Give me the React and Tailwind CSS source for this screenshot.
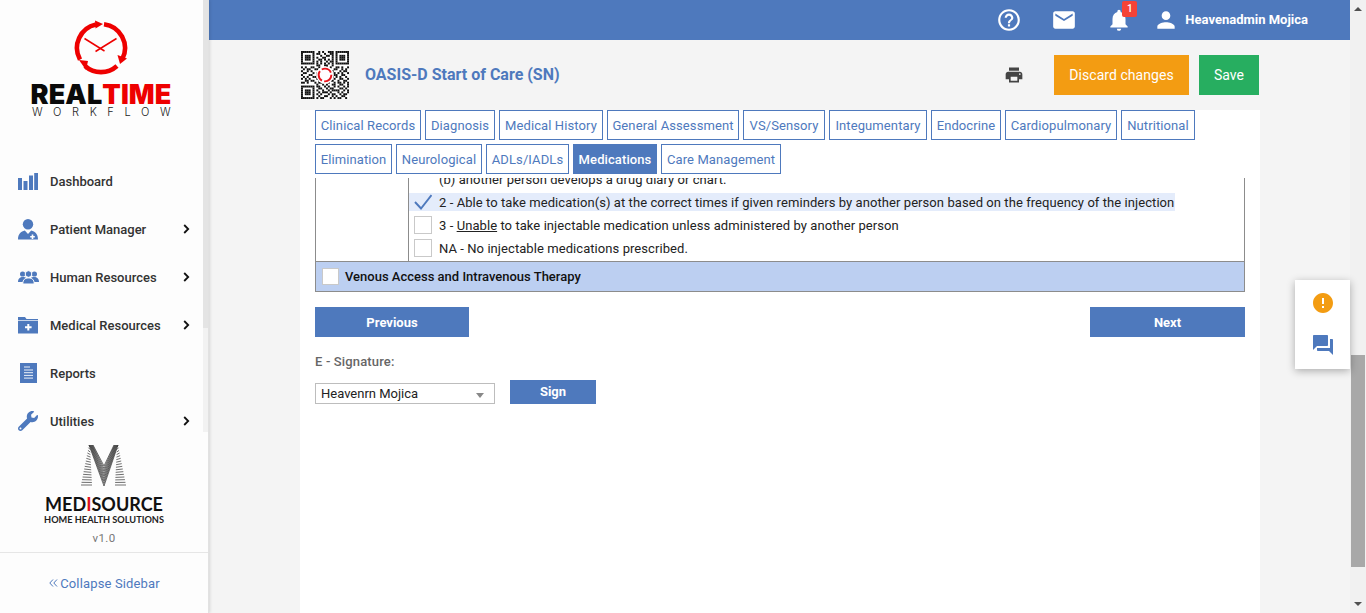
import React from "react";
import { MdHelpOutline, MdMail, MdNotifications, MdPerson, MdPrint, MdError, MdQuestionAnswer } from "react-icons/md";
import { FaWrench } from "react-icons/fa";

const BLUE = "#4e79bd";

function ClockLogo() {
  return (
    <svg width="56" height="56" viewBox="0 0 56 56" className="block">
      <g fill="none" stroke="#ee0000" strokeWidth="4.6">
        <path d="M7 39.6 A24 24 0 0 1 23 4.5" />
        <path d="M31 4.2 A24 24 0 0 1 49.5 38.6" />
        <path d="M44 46 A24 24 0 0 1 12 46" />
      </g>
      <g fill="#ee0000">
        <path d="M22 0.5 L30 4 L22.5 8.5 Z" />
        <path d="M44.5 35 L54 38.5 L47 44 Z" />
        <path d="M6 40 L15 41 L13 50 Z" />
      </g>
      <g stroke="#ee0000" strokeWidth="1.5" fill="none">
        <path d="M11.5 18.5 L31.5 31" />
        <path d="M43.5 18.5 L22.5 31.5" />
      </g>
    </svg>
  );
}

function MLogo() {
  const lines = [];
  const add = (k, n, x1a, y1a, x1b, y1b, x2a, y2a, x2b, y2b) => {
    for (let i = 0; i < n; i++) {
      const t = i / (n - 1);
      lines.push(
        <path key={k + i} d={`M${x1a + (x1b - x1a) * t} ${y1a + (y1b - y1a) * t} L${x2a + (x2b - x2a) * t} ${y2a + (y2b - y2a) * t}`} />
      );
    }
  };
  add("a", 16, 9, 1, 1, 41, 10, 3, 12, 41);
  add("b", 16, 38, 1, 46, 41, 37, 3, 35, 41);
  add("c", 9, 9, 1, 13, 1, 24, 42, 24, 22);
  add("d", 9, 38, 1, 34, 1, 24, 42, 24, 22);
  return (
    <svg width="48" height="43" viewBox="0 0 48 43" className="block">
      <g stroke="#303030" strokeWidth="0.7" fill="none">{lines}</g>
    </svg>
  );
}

function DashIcon() {
  return (
    <svg width="20" height="17" viewBox="0 0 20 17" fill={BLUE} className="block">
      <rect x="0" y="5" width="4" height="12" />
      <rect x="5.5" y="8" width="4" height="9" />
      <rect x="11" y="2.5" width="4" height="14.5" />
      <rect x="16.2" y="0" width="3.8" height="17" />
    </svg>
  );
}

function PatientIcon() {
  return (
    <svg width="20" height="21" viewBox="0 0 20 21" fill={BLUE} className="block">
      <circle cx="10" cy="5.3" r="5.2" />
      <path d="M0 20.5 C0 15 3 12.5 6.8 11.6 L10 15 L13.2 11.6 C17 12.5 20 15 20 20.5 Z" />
      <path d="M13.7 15.5 h1.6 v1.5 h1.5 v1.6 h-1.5 v1.5 h-1.6 v-1.5 h-1.5 v-1.6 h1.5 Z" fill="#fff" />
    </svg>
  );
}

function TeamIcon() {
  return (
    <svg width="21" height="14" viewBox="0 0 21 14" fill={BLUE} className="block">
      <circle cx="4.6" cy="4" r="2.6" />
      <circle cx="16.4" cy="4" r="2.6" />
      <path d="M0 12 C0 8.5 2 7 4.8 7 C8 7 10 8.5 10 12 Z" />
      <path d="M11 12 C11 8.5 13 7 16.2 7 C19 7 21 8.5 21 12 Z" />
      <circle cx="10.5" cy="4" r="3.3" stroke="#fff" strokeWidth="1" />
      <path d="M4.8 14 C4.8 9.5 7 8 10.5 8 C14 8 16.2 9.5 16.2 14 Z" stroke="#fff" strokeWidth="1" />
    </svg>
  );
}

function FolderIcon() {
  return (
    <svg width="20" height="17" viewBox="0 0 20 17" fill={BLUE} className="block">
      <path d="M0 0 H7 L8.5 2 H20 V3 H0 Z" />
      <path d="M0 3.7 H20 V16.5 H0 Z" />
      <path d="M9.3 7 h2 v2.3 h2.3 v2 h-2.3 v2.3 h-2 v-2.3 h-2.3 v-2 h2.3 Z" fill="#fff" />
    </svg>
  );
}

function ReportIcon() {
  return (
    <svg width="17" height="20" viewBox="0 0 17 20" className="block ml-[2px]">
      <rect width="17" height="20" fill={BLUE} />
      <g stroke="#fff" strokeWidth="0.9">
        <path d="M4 4 H10" />
        <path d="M4 7 H13" />
        <path d="M4 9.7 H13" />
        <path d="M4 12.4 H13" />
        <path d="M4 15.1 H13" />
      </g>
    </svg>
  );
}

function QR() {
  const seed = [
    "0000000110101100010000000","0111110100110110010111110","0100010111011001010100010","0100010101100111010100010","0100010110010101010100010","0111110101011010010111110","0000000101010101010000000","1111111100110011011111111",
    "0101100110111010110010110","1010011001100001100110101","0110101110000000011101001","1001110100000000001010110","0111001100000000000110011","1010110010000000010101101","0101011101000000101100110","1100100110110010011011001","0010111010011101101001010",
    "1111111101101011001100110","0000000100110101101011010","0111110110011010011100101","0100010101101101000011010","0100010110100010111010110","0100010101011101001101001","0111110110110011010110011","0000000101001110101001101",
  ];
  const rects = [];
  seed.forEach((row, y) =>
    row.split("").forEach((c, x) => {
      if (c === "0") rects.push(<rect key={x + "-" + y} x={x} y={y} width="1.02" height="1.02" />);
    })
  );
  return (
    <svg width="48" height="48" viewBox="0 0 25 25" className="block shrink-0 bg-white">
      <g fill="#111">{rects}</g>
      <circle cx="12.5" cy="12.5" r="4.6" fill="#fff" />
      <circle cx="12.5" cy="12.5" r="3.3" fill="none" stroke="#e8141c" strokeWidth="1" strokeDasharray="5.5 1.2" />
    </svg>
  );
}

function NavItem({ icon, label, arrow }) {
  return (
    <div className="flex h-12 items-center pl-[18px] pr-[9px] shrink-0">
      <div className="w-[32px] flex items-center text-[#4e79bd]">{icon}</div>
      <span className="flex-1 text-[13px] font-medium text-[#333] pt-[2px]">{label}</span>
      {arrow && (
        <svg width="7" height="10" viewBox="0 0 7 10" className="block mr-[4px]">
          <path d="M1.2 1 L5.2 5 L1.2 9" fill="none" stroke="#111" strokeWidth="1.8" />
        </svg>
      )}
    </div>
  );
}

function Sidebar() {
  return (
    <aside className="w-[209px] shrink-0 h-full flex flex-col bg-[#fdfdfd] border-r border-[#e2e2e2] shadow-[1px_0_3px_rgba(0,0,0,0.12)] z-10">
      <div className="h-[432px] flex shrink-0">
        <div className="flex-1 flex flex-col min-w-0 overflow-hidden">
          <div className="h-[133px] shrink-0 flex flex-col items-center pt-[20px]">
            <div className="ml-[-1px]"><ClockLogo /></div>
            <div className="mt-[7px] flex text-[27px] leading-[24px] font-black tracking-[0.1px] font-['Inter',sans-serif] whitespace-nowrap ml-[-1px]">
              <span className="text-[#0a0a0a]">REAL</span>
              <span className="text-[#ee0000]">TIME</span>
            </div>
            <div className="text-[11px] leading-[11px] tracking-[10.6px] pl-[10px] text-[#222] font-light font-['Inter',sans-serif] whitespace-nowrap">WORKFLOW</div>
          </div>
          <nav className="flex flex-col pt-[24px]">
            <NavItem icon={<DashIcon />} label="Dashboard" />
            <NavItem icon={<PatientIcon />} label="Patient Manager" arrow />
            <NavItem icon={<TeamIcon />} label="Human Resources" arrow />
            <NavItem icon={<FolderIcon />} label="Medical Resources" arrow />
            <NavItem icon={<ReportIcon />} label="Reports" />
            <NavItem icon={<FaWrench size={20} />} label="Utilities" arrow />
          </nav>
        </div>
        <div className="w-[5px] shrink-0 bg-[#f2f2f2] h-full">
          <div className="h-[328px] bg-[#e4e4e4]" />
        </div>
      </div>
      <div className="h-[121px] shrink-0 flex flex-col items-center border-b border-[#e6e6e6] pt-[12px]">
        <MLogo />
        <div className="mt-[8px] text-[18px] leading-[19px] font-bold text-[#111] font-['Lato',sans-serif]">
          MED<span className="text-[#e0141c]">I</span>SOURCE
        </div>
        <div className="text-[9.2px] leading-[11px] text-[#222] font-bold font-['Lato',sans-serif]">HOME HEALTH SOLUTIONS</div>
        <div className="mt-[7px] text-[11.5px] leading-[12px] text-[#777] tracking-[0.4px]">v1.0</div>
      </div>
      <div className="flex-1 flex items-center justify-center text-[13px] text-[#4e79bd] tracking-[0.15px] pt-[2px] pl-[1px]">
        <svg width="9" height="8" viewBox="0 0 9 8" className="block mr-[2px] -mt-[2px]">
          <path d="M4 0.5 L0.8 4 L4 7.5 M8 0.5 L4.8 4 L8 7.5" fill="none" stroke="#4e79bd" strokeWidth="1" />
        </svg>
        Collapse Sidebar
      </div>
    </aside>
  );
}

function TopBar() {
  return (
    <header className="h-10 shrink-0 bg-[#4e79bd] flex items-center justify-end text-white pr-[42px]">
      <MdHelpOutline size={26} className="mr-[29px]" />
      <MdMail size={26} className="mr-[29px]" />
      <div className="relative mr-[21px]">
        <MdNotifications size={26} />
        <span className="absolute -top-[6px] left-[16px] w-[15px] h-[16px] rounded-[2px] bg-[#f44336] text-[10px] leading-[15px] text-center font-medium">1</span>
      </div>
      <MdPerson size={26} className="mr-[6px]" />
      <span className="text-[13px] font-bold">Heavenadmin Mojica</span>
    </header>
  );
}

const TABS1 = [
  ["Clinical Records", "w-[106px]"],
  ["Diagnosis", "w-[70px]"],
  ["Medical History", "w-[104px]"],
  ["General Assessment", "w-[132px]"],
  ["VS/Sensory", "w-[82px]"],
  ["Integumentary", "w-[98px]"],
  ["Endocrine", "w-[70px]"],
  ["Cardiopulmonary", "w-[112px]"],
  ["Nutritional", "w-[74px]"],
];
const TABS2 = [
  ["Elimination", "w-[77px]"],
  ["Neurological", "w-[86px]"],
  ["ADLs/IADLs", "w-[83px]"],
  ["Medications", "w-[84px]"],
  ["Care Management", "w-[120px]"],
];

function Tab({ label, width }) {
  const active = label === "Medications";
  return (
    <div className={`h-[30px] ${width} pt-[2px] border border-[#4e79bd] flex items-center justify-center text-[13px] tracking-[0.1px] whitespace-nowrap ${active ? "bg-[#4e79bd] text-white font-medium" : "text-[#4e79bd]"}`}>
      {label}
    </div>
  );
}

function Option({ children, checked }) {
  return (
    <div className={`flex items-center h-[18px] mb-[5px] pl-[5px] w-fit pr-[1px] text-[13px] text-[#222] ${checked ? "bg-[#e4ecfb]" : ""}`}>
      {checked ? (
        <svg width="18" height="18" viewBox="0 0 18 18" className="block shrink-0">
          <path d="M1 9 L7 15.5 L17.5 2" fill="none" stroke="#4e79bd" strokeWidth="1.9" />
        </svg>
      ) : (
        <div className="w-[18px] h-[18px] shrink-0 bg-white border border-[#c9c9c9]" />
      )}
      <span className="ml-[7px] whitespace-nowrap tracking-[0.07px] pt-[2px]">{children}</span>
    </div>
  );
}

function Content() {
  return (
    <div className="w-[960px] ml-[91px] flex-1 min-h-0 flex flex-col">
      <div className="h-[70px] shrink-0 flex items-center pl-[1px] pr-[1px]">
        <QR />
        <h1 className="ml-[16px] text-[16px] font-bold text-[#4e79bd]">OASIS-D Start of Care (SN)</h1>
        <MdPrint size={20} className="ml-auto mr-[30px] text-[#444]" />
        <button className="w-[135px] h-10 bg-[#f39c12] text-white text-[14px] tracking-[0.05px]">Discard changes</button>
        <button className="w-[60px] h-10 ml-[10px] bg-[#27ae60] text-white text-[14px]">Save</button>
      </div>
      <div className="flex-1 bg-white px-[15px]">
        <div className="flex flex-col gap-[4px]">
          <div className="flex gap-[4px]">{TABS1.map(([t, w]) => <Tab key={t} label={t} width={w} />)}</div>
          <div className="flex gap-[4px]">{TABS2.map(([t, w]) => <Tab key={t} label={t} width={w} />)}</div>
        </div>
        <div className="mt-[4px] border-x border-b border-[#8c8c8c] w-[930px]">
          <div className="flex h-[83px] overflow-hidden">
            <div className="w-[93px] shrink-0 border-r border-[#8c8c8c]" />
            <div className="flex-1 min-w-0">
              <div className="text-[13px] leading-[18px] h-[15px] text-[#222] pl-[30px] -mt-[8px] mb-[8px] pt-[1px] tracking-[0.05px]">(b) another person develops a drug diary or chart.</div>
              <Option checked>2 - Able to take medication(s) at the correct times if given reminders by another person based on the frequency of the injection</Option>
              <Option>3 - <span className="underline">Unable</span> to take injectable medication unless administered by another person</Option>
              <Option>NA - No injectable medications prescribed.</Option>
            </div>
          </div>
          <div className="h-[30px] bg-[#bccff1] border-t border-[#8c8c8c] flex items-center pl-[6px]">
            <div className="w-[17px] h-[17px] bg-white border border-[#c9c9c9]" />
            <span className="ml-[6px] text-[13px] font-medium text-[#111]">Venous Access and Intravenous Therapy</span>
          </div>
        </div>
        <div className="mt-[15px] w-[930px] flex justify-between">
          <button className="w-[154px] h-[30px] pt-[2px] bg-[#4e79bd] text-white text-[13px] font-bold">Previous</button>
          <button className="w-[155px] h-[30px] pt-[2px] bg-[#4e79bd] text-white text-[13px] font-bold">Next</button>
        </div>
        <div className="mt-[17px] text-[13px] leading-[16px] text-[#666] font-medium tracking-[0.15px]">E - Signature:</div>
        <div className="mt-[10px] flex items-end">
          <div className="w-[180px] h-[21px] border border-[#bdbdbd] flex items-center pl-[5px] pr-[10px] text-[13px] text-[#222]">
            <span className="flex-1">Heavenrn Mojica</span>
            <span className="w-0 h-0 border-x-[4px] border-x-transparent border-t-[5px] border-t-[#888] mt-[3px]" />
          </div>
          <button className="ml-[15px] w-[86px] h-[24px] bg-[#4e79bd] text-white text-[13px] font-bold">Sign</button>
        </div>
      </div>
    </div>
  );
}

function PageScrollbar() {
  return (
    <div className="w-4 shrink-0 h-full bg-[#f1f1f1] flex flex-col items-center">
      <div className="h-[355px] w-full pt-[7px] flex justify-center">
        <span className="w-0 h-0 border-x-[4px] border-x-transparent border-b-[4px] border-b-[#505050]" />
      </div>
      <div className="h-[212px] w-[14px] bg-[#a8a8a8]" />
      <div className="flex-1 w-full flex items-end justify-center pb-[7px]">
        <span className="w-0 h-0 border-x-[4px] border-x-transparent border-t-[4px] border-t-[#505050]" />
      </div>
    </div>
  );
}

export default function App() {
  return (
    <div className="flex w-[1366px] h-[613px] overflow-hidden bg-[#f4f4f4] font-['Roboto',sans-serif] relative">
      <Sidebar />
      <main className="flex-1 min-w-0 flex flex-col h-full">
        <TopBar />
        <Content />
      </main>
      <PageScrollbar />
      <div className="absolute left-[1295px] top-[280px] w-[55px] h-[89px] bg-white shadow-[0_2px_8px_rgba(0,0,0,0.3)] flex flex-col items-center pt-[11px] gap-[18px]">
        <MdError size={24} className="text-[#f39c12]" />
        <MdQuestionAnswer size={24} className="text-[#4e79bd]" />
      </div>
    </div>
  );
}
